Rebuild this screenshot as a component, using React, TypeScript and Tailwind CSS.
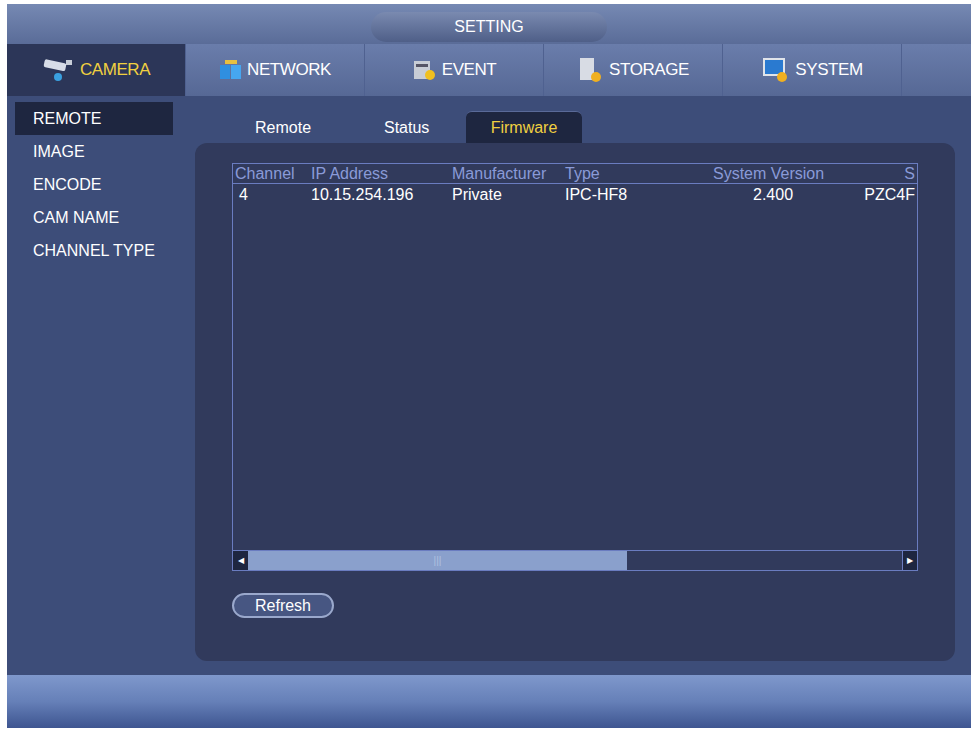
import React from "react";

const F = { fontFamily: '"Liberation Sans", Arial, sans-serif' };

function Cam() {
  return (
    <svg width="34" height="24" viewBox="0 0 34 24">
      <rect x="2" y="3" width="22" height="8" rx="2" fill="#d8dde8" transform="rotate(12 12 7)" />
      <rect x="24" y="2" width="6" height="5" fill="#c8ced8" />
      <circle cx="16" cy="19" r="4" fill="#3aa0e0" />
    </svg>
  );
}
function Net() {
  return (
    <svg width="24" height="22" viewBox="0 0 24 22">
      <rect x="1" y="6" width="10" height="14" fill="#2f8fe0" />
      <rect x="12" y="6" width="10" height="14" fill="#46a6f0" />
      <rect x="6" y="1" width="12" height="4" fill="#e8c040" />
    </svg>
  );
}
function Ev() {
  return (
    <svg width="26" height="24" viewBox="0 0 26 24">
      <rect x="2" y="3" width="16" height="18" fill="#c8cdd6" />
      <rect x="4" y="6" width="12" height="3" fill="#556" />
      <circle cx="18" cy="17" r="5" fill="#f0c020" />
    </svg>
  );
}
function Sto() {
  return (
    <svg width="28" height="28" viewBox="0 0 28 28">
      <rect x="3" y="2" width="14" height="22" fill="#d8dce4" />
      <circle cx="19" cy="21" r="5" fill="#f0b020" />
    </svg>
  );
}
function Sys() {
  return (
    <svg width="30" height="28" viewBox="0 0 30 28">
      <rect x="2" y="2" width="22" height="18" fill="#e0e4ea" />
      <rect x="4" y="4" width="18" height="14" fill="#2a7ad0" />
      <circle cx="21" cy="21" r="5" fill="#f0b020" />
    </svg>
  );
}

export default function App() {
  const tabs = [
    { n: "CAMERA", i: <Cam />, a: true },
    { n: "NETWORK", i: <Net /> },
    { n: "EVENT", i: <Ev /> },
    { n: "STORAGE", i: <Sto /> },
    { n: "SYSTEM", i: <Sys /> },
  ];
  return (
    <div className="w-[979px] h-[732px] bg-white pl-[7px] pr-[8px] pt-[4px] pb-[4px]" style={F}>
      <div className="h-full flex flex-col bg-[#3d4d79]">
        <div className="h-[40px] flex items-center justify-center bg-gradient-to-b from-[#7689b3] to-[#5a6c98]">
          <div className="w-[236px] h-[30px] mt-[6px] rounded-full bg-gradient-to-b from-[#7a8ab0] to-[#4f5f88] flex items-center justify-center text-white text-[16px]">SETTING</div>
        </div>
        <div className="h-[52px] flex bg-gradient-to-b from-[#6a7dab] to-[#566895]">
          {tabs.map((t) => (
            <div key={t.n} className={`w-[179px] flex items-center justify-center gap-1 border-r border-[#4f6190] ${t.a ? "bg-[#2c3658] text-[#f0d040]" : "text-white"} text-[17px] tracking-tight`}>
              {t.i}
              <span>{t.n}</span>
            </div>
          ))}
          <div className="flex-1" />
        </div>
        <div className="flex-1 flex">
          <div className="w-[176px] pt-[6px] pl-[8px] flex flex-col text-white text-[16px]">
            {["REMOTE", "IMAGE", "ENCODE", "CAM NAME", "CHANNEL TYPE"].map((s, i) => (
              <div key={s} className={`h-[33px] flex items-center pl-[18px] ${i === 0 ? "bg-[#1e2640] w-[158px] h-[31px]" : ""}`}>{s}</div>
            ))}
          </div>
          <div className="flex-1 pl-[13px] pr-[16px] pt-[12px] pb-[14px] flex flex-col">
            <div className="h-[35px] flex items-end pl-[30px] gap-0 text-white text-[16px]">
              <div className="w-[159px] h-[30px] flex items-center pl-[30px]">Remote</div>
              <div className="w-[82px] h-[30px] flex items-center">Status</div>
              <div className="w-[116px] h-[32px] flex items-center justify-center rounded-t-[6px] bg-[#1e2640] text-[#f0d040] border-t border-[#5a6a98]">Firmware</div>
            </div>
            <div className="flex-1 bg-[#313a5c] rounded-[12px] pt-[20px] pl-[37px] pr-[37px] flex flex-col">
              <div className="h-[408px] w-[686px] border border-[#6a7cc0] flex flex-col text-[16px]">
                <div className="h-[20px] flex items-center text-[#8a9ad8] border-b border-[#6a7cc0] whitespace-nowrap">
                  <span className="w-[78px] pl-[2px]">Channel</span>
                  <span className="w-[141px]">IP Address</span>
                  <span className="w-[113px]">Manufacturer</span>
                  <span className="w-[148px]">Type</span>
                  <span className="w-[132px]">System Version</span>
                  <span className="flex-1 text-right pr-[2px]">S</span>
                </div>
                <div className="h-[22px] flex items-center text-white whitespace-nowrap">
                  <span className="w-[78px] pl-[6px]">4</span>
                  <span className="w-[141px]">10.15.254.196</span>
                  <span className="w-[113px]">Private</span>
                  <span className="w-[148px]">IPC-HF8</span>
                  <span className="w-[132px] pl-[40px]">2.400</span>
                  <span className="flex-1 text-right pr-[2px]">PZC4F</span>
                </div>
                <div className="flex-1" />
                <div className="h-[20px] border-t border-[#6a7cc0] flex items-stretch">
                  <div className="w-[15px] bg-[#1e2640] flex items-center justify-center text-white text-[8px]">◀</div>
                  <div className="w-[379px] bg-[#8aa0cc] flex items-center justify-center text-[#b0c0e0] text-[10px]">|||</div>
                  <div className="flex-1" />
                  <div className="w-[15px] bg-[#1e2640] border-l border-[#6a7cc0] flex items-center justify-center text-white text-[8px]">▶</div>
                </div>
              </div>
              <div className="mt-[22px] w-[102px] h-[25px] rounded-full border-2 border-[#9aa8cc] bg-[#475682] text-white text-[16px] flex items-center justify-center">Refresh</div>
            </div>
          </div>
        </div>
        <div className="h-[53px] bg-gradient-to-b from-[#7f98cc] via-[#6680b8] to-[#3e5590]" />
      </div>
    </div>
  );
}
